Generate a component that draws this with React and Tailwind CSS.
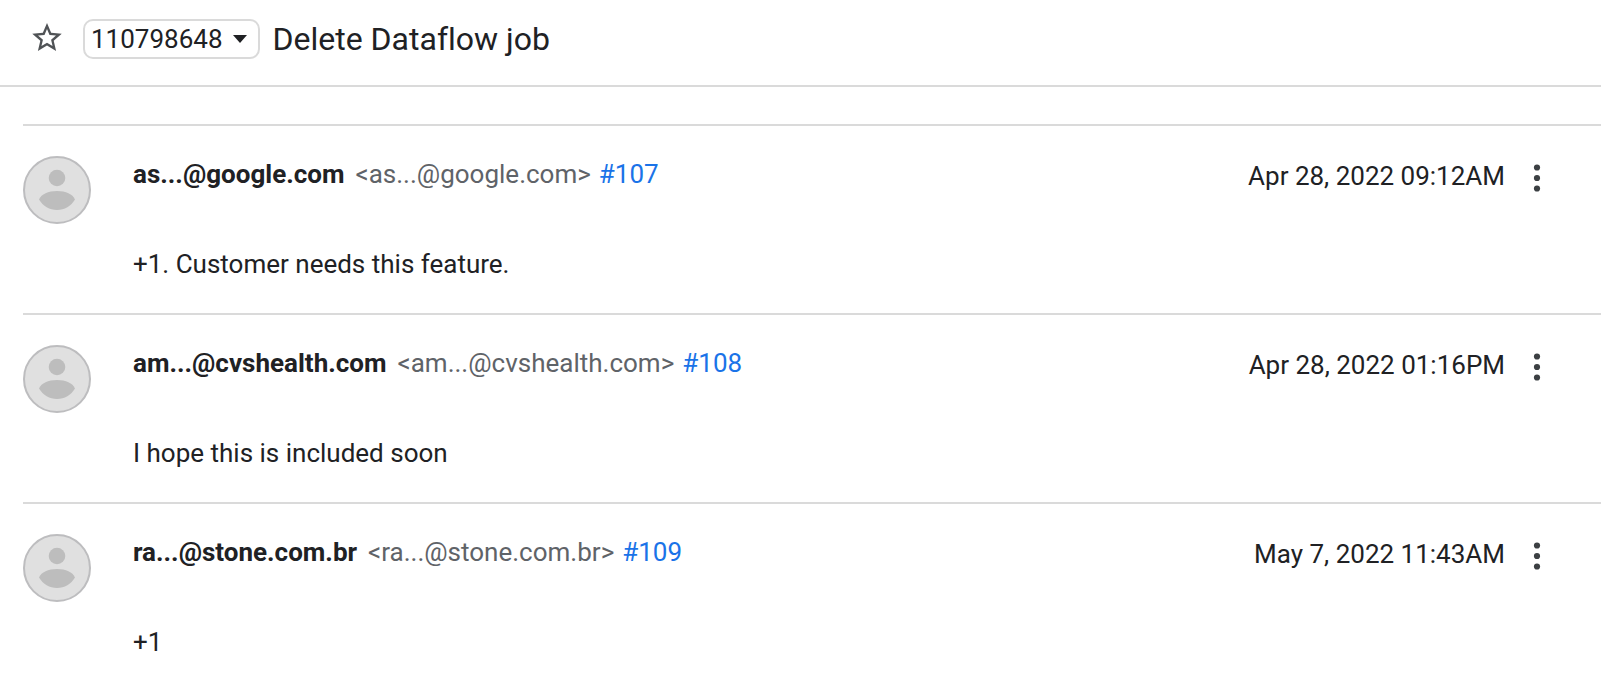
const comments = [
  { id: 107, user: "as...@google.com", date: "Apr 28, 2022 09:12AM", text: "+1. Customer needs this feature." },
  { id: 108, user: "am...@cvshealth.com", date: "Apr 28, 2022 01:16PM", text: "I hope this is included soon" },
  { id: 109, user: "ra...@stone.com.br", date: "May 7, 2022 11:43AM", text: "+1" },
];

function Avatar() {
  return (
    <svg viewBox="0 0 68 68" className="size-[68px] shrink-0" aria-hidden="true">
      <circle cx="34" cy="34" r="33" fill="#e0e0e0" stroke="#bdbdbf" strokeWidth="2" />
      <circle cx="34" cy="22" r="8.3" fill="#bdbdbd" />
      <path d="M16 43.5C18.5 38 25 35 34 35s15.500 3 18 8.500C48 50 41.500 54 34 54s-14-4-18-10.500z" fill="#bdbdbd" />
    </svg>
  );
}

function Comment({ comment }) {
  return (
    <li className="flex gap-[42px] border-t-2 border-[#dadada] pt-[30px] pb-[31px]">
      <Avatar />
      <article className="min-w-0 flex-1">
        <header className="flex items-start justify-between">
          <h2 className="flex flex-wrap gap-x-2 leading-9">
            <span className="mr-[3px] font-bold">{comment.user}</span>
            <span className="text-[#5f6368]">&lt;{comment.user}&gt;</span>
            <a href={`#comment${comment.id}`} className="text-[#1a73e8]">#{comment.id}</a>
          </h2>
          <div className="flex items-center gap-5 pt-0.5 pr-[52px]">
            <time className="leading-9">{comment.date}</time>
            <button type="button" aria-label="Comment actions" className="flex h-9 w-6 items-center justify-center">
              <svg viewBox="0 0 8 32" className="h-8 w-2" fill="#3c4043" aria-hidden="true">
                <circle cx="4" cy="7.500" r="3.100" />
                <circle cx="4" cy="18" r="3.100" />
                <circle cx="4" cy="28.500" r="3.100" />
              </svg>
            </button>
          </div>
        </header>
        <p className="mt-[52px] leading-9">{comment.text}</p>
      </article>
    </li>
  );
}

export default function App() {
  return (
    <div className="bg-white pr-[3px] font-['Roboto',sans-serif] text-[26px] text-[#202124] [font-variant-ligatures:none]">
      <header className="flex items-start border-b-2 border-[#dadada] pt-[19px] pb-[26px] pl-8">
        <button type="button" aria-label="Star this issue" className="flex h-9 w-[30px] items-center">
          <svg viewBox="2 2 20 19" className="h-7 w-[30px]" fill="#505356" aria-hidden="true">
            <path d="M22 9.240l-7.190-.62L12 2 9.190 8.630 2 9.240l5.460 4.730L5.820 21 12 17.270 18.180 21l-1.630-7.030L22 9.240zM12 15.400l-3.760 2.270 1-4.280-3.320-2.880 4.380-.38L12 6.100l1.710 4.040 4.380.38-3.320 2.880 1 4.280L12 15.400z" />
          </svg>
        </button>
        <button type="button" className="ml-[21px] flex h-10 items-center gap-[10px] rounded-[10px] border-2 border-[#dadada] pr-[11px] pl-[6px]">
          110798648
          <svg viewBox="0 0 14 8" className="h-2 w-[14px]" fill="#202124" aria-hidden="true">
            <path d="M0 0h14L7 8z" />
          </svg>
        </button>
        <h1 className="ml-[13px] text-[32px] leading-10">Delete Dataflow job</h1>
      </header>
      <ul className="mt-[37px] ml-[23px]">
        {comments.map((comment) => (
          <Comment key={comment.id} comment={comment} />
        ))}
      </ul>
    </div>
  );
}
